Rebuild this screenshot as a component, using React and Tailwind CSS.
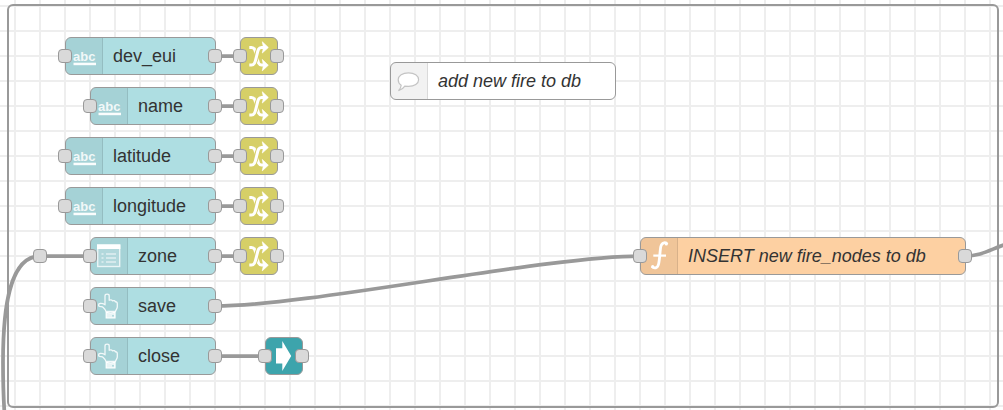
import React from "react";

const ICON = "block h-[36px] w-[36px] shrink-0";

function AbcIcon() {
  return (
    <svg viewBox="1 1 36 36" className={ICON} aria-hidden="true">
      <text x="8" y="23.500" fill="#fff" opacity="0.85" fontSize="13" fontWeight="700" className="font-['Liberation_Sans',Arial,sans-serif]">abc</text>
      <rect x="8.500" y="25.700" width="22.500" height="2.500" fill="#fff" opacity="0.95" />
    </svg>
  );
}

function FormIcon() {
  return (
    <svg viewBox="1 1 36 36" className={ICON} aria-hidden="true">
      <rect x="7.700" y="8" width="22" height="21.500" fill="#fff" fillOpacity="0.15" stroke="#fff" strokeOpacity="0.75" strokeWidth="1.400" />
      <rect x="7" y="7.500" width="23.400" height="4.500" fill="#fff" />
      <path d="M16 17H26M16 21H26M16 25H26M11.500 17h2M11.500 21h2M11.500 25h2" stroke="#fff" strokeOpacity="0.9" strokeWidth="1.200" />
    </svg>
  );
}

function HandIcon() {
  return (
    <svg viewBox="1 1 36 36" className={ICON} aria-hidden="true">
      <path
        d="M16 24.500C15.800 22.500 14 21.200 12.600 19.900L9.500 19.400C8 18.700 8.300 16.700 10 16.500C12 16.200 13.500 16.800 15 17.800V8.900C15 6.600 19.200 6.600 19.200 8.900V13.300C20.300 12.500 22 12.700 22.500 13.900C23.700 13.200 25 13.600 25.300 14.800C26.700 14.600 27.300 15.400 27.300 16.700V20C27.300 21.800 25.700 22.600 25.500 24.500Z"
        fill="none" stroke="#fff" strokeOpacity="0.85" strokeWidth="1.300" strokeLinejoin="round"
      />
      <path d="M16.200 25.300Q20.500 26.700 25 25.300V31H16.200Z" fill="#fff" fillOpacity="0.75" stroke="#fff" strokeWidth="1.200" />
      <rect x="22.200" y="28" width="1.600" height="1.600" fill="#a6d3d7" />
    </svg>
  );
}

function ChangeIcon() {
  return (
    <svg viewBox="1 1 36 36" className={ICON} aria-hidden="true">
      <g fill="none" stroke="#fff" strokeWidth="3">
        <path d="M9.300 10.500H11.500C14.500 10.500 15.200 13 16.500 18.500C18 25 18.300 28 21.500 28H24" />
        <path d="M13.500 26C15.300 24 15.500 22 16.500 19.300C17.800 14.500 18.200 12.500 20 11" stroke="#d6cf67" strokeWidth="5.500" />
        <path d="M9.300 28H11.500C14.500 28 15.200 25 16.500 19.500C18 13 18.300 10.500 21.500 10.500H24" />
      </g>
      <path d="M22.300 4.800L28.300 10.500L22.300 16L23.500 10.500ZM22.300 22.500L28.300 28.200L22.300 33.800L23.500 28.200Z" fill="#fff" stroke="#fff" strokeWidth="0.700" />
    </svg>
  );
}

function ArrowIcon() {
  return (
    <svg viewBox="1 1 36 36" className={ICON} aria-hidden="true">
      <path d="M11 11.300h6.300V4L26.200 19L17.300 34V26.500H11Z" fill="#fff" />
    </svg>
  );
}

function CommentIcon() {
  return (
    <svg viewBox="1 1 36 36" className={ICON} aria-hidden="true">
      <path d="M18.500 10.800C24.500 10.800 28.600 13.800 28.600 17.700C28.600 21.600 24.500 24.400 18.500 24.400L14.800 24.100C13.500 26.200 11.500 27.800 8.500 28.700C10.200 27 11 25.200 11.200 23.200C9.200 21.900 8.200 20 8.200 17.700C8.200 13.800 12.500 10.800 18.500 10.800Z" fill="#fff" stroke="#c4c4c4" strokeWidth="1.200" />
    </svg>
  );
}

function FunctionIcon() {
  return (
    <svg viewBox="1 1 36 36" className={ICON} aria-hidden="true">
      <path d="M27 7.200C26.300 5.300 22 4.500 20.800 9.500C20 13 19.800 22 18.600 27C17.600 31.500 14 31.800 12 29.600" fill="none" stroke="#fff" strokeWidth="2.800" />
      <path d="M13.300 18.600H26" stroke="#fff" strokeWidth="2.200" />
      <circle cx="26.300" cy="6.900" r="1.600" fill="#fff" />
      <circle cx="12.700" cy="29.600" r="1.600" fill="#fff" />
    </svg>
  );
}

function Port({ side }) {
  return (
    <span
      className={`absolute top-[11px] h-[14px] w-[14px] rounded-[4px] border border-[#999] bg-[#d9d9d9] ${side === "in" ? "-left-[8px]" : "-right-[7px]"}`}
    />
  );
}

function FlowNode({ place, color, icon, label, italic, ports = true }) {
  return (
    <div className={`absolute flex h-[38px] rounded-md border border-[#999] ${color} ${place}`}>
      <div className={`flex shrink-0 rounded-l-[5px] ${label ? "w-[37px] border-r border-black/10 bg-black/5" : ""}`}>{icon}</div>
      {label && (
        <span className={`whitespace-nowrap pl-[10px] text-lg leading-[36px] text-[#333] ${italic ? "italic" : ""}`}>{label}</span>
      )}
      {ports && <Port side="in" />}
      {ports && <Port side="out" />}
    </div>
  );
}

const UI = "bg-[#aedee2]";

const fields = [
  { label: "dev_eui", icon: <AbcIcon />, place: "left-[65px] top-[37px] w-[151px]", change: "left-[240px] top-[37px] w-[38px]" },
  { label: "name", icon: <AbcIcon />, place: "left-[90px] top-[87px] w-[126px]", change: "left-[240px] top-[87px] w-[38px]" },
  { label: "latitude", icon: <AbcIcon />, place: "left-[65px] top-[137px] w-[151px]", change: "left-[240px] top-[137px] w-[38px]" },
  { label: "longitude", icon: <AbcIcon />, place: "left-[65px] top-[187px] w-[151px]", change: "left-[240px] top-[187px] w-[38px]" },
  { label: "zone", icon: <FormIcon />, place: "left-[90px] top-[237px] w-[126px]", change: "left-[240px] top-[237px] w-[38px]" },
  { label: "save", icon: <HandIcon />, place: "left-[90px] top-[287px] w-[126px]" },
  { label: "close", icon: <HandIcon />, place: "left-[90px] top-[337px] w-[126px]" },
];

function Wires() {
  return (
    <svg className="absolute inset-0 h-full w-full" fill="none" stroke="#999" strokeWidth="3.750" aria-hidden="true">
      <path d="M215 56H240M215 106H240M215 156H240M215 206H240M215 256H240M40 256H90M215 356H265" />
      <path d="M215 306C309 306 546 256 640 256" />
      <path d="M40 256C10 256 3 306 3 362C3 382 3.500 398 4.500 414" />
      <path d="M965 256C983 256 992 248 1010 243" />
    </svg>
  );
}

export default function App() {
  return (
    <main className="relative min-h-screen w-full overflow-hidden bg-white bg-[linear-gradient(to_right,#eee_2px,transparent_2px),linear-gradient(to_bottom,#eee_2px,transparent_2px)] bg-[length:25px_25px] bg-[position:14px_5px] font-['Liberation_Sans',Arial,sans-serif]">
      <section aria-label="Flow group" className="absolute bottom-[2px] left-[7px] right-[4px] top-[4px] rounded-md border-2 border-[#999]" />
      <Wires />
      {fields.map((f) => (
        <React.Fragment key={f.label}>
          <FlowNode place={f.place} color={UI} icon={f.icon} label={f.label} />
          {f.change && <FlowNode place={f.change} color="bg-[#d6cf67]" icon={<ChangeIcon />} />}
        </React.Fragment>
      ))}
      <FlowNode place="left-[265px] top-[337px] w-[38px]" color="bg-[#3da4ac]" icon={<ArrowIcon />} />
      <FlowNode place="left-[390px] top-[62px] w-[226px]" color="bg-white" icon={<CommentIcon />} label="add new fire to db" italic ports={false} />
      <FlowNode place="left-[640px] top-[237px] w-[326px]" color="bg-[#fdd0a2]" icon={<FunctionIcon />} label="INSERT new fire_nodes to db" italic />
      <span className="absolute left-[33px] top-[249px] h-[14px] w-[14px] rounded-[4px] border border-[#999] bg-[#d9d9d9]" />
    </main>
  );
}
